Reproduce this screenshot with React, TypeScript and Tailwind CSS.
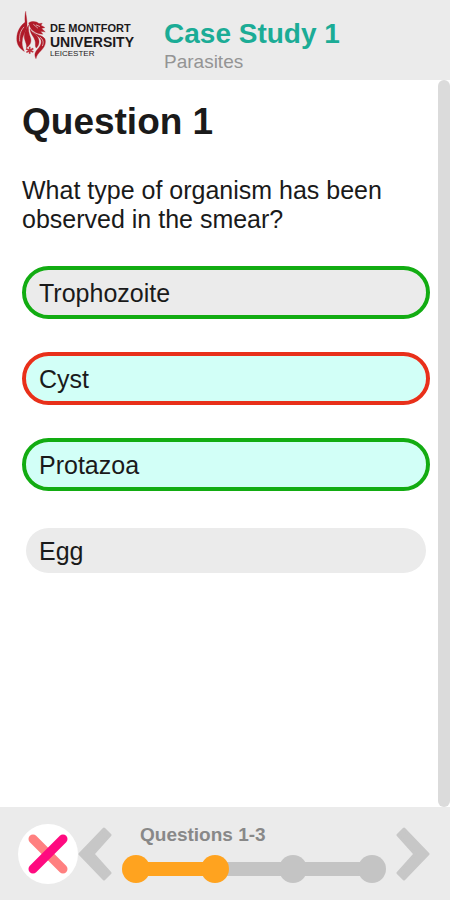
import React, { useState } from "react";

type Result = "correct" | "wrong" | "none";

interface Option {
  label: string;
  chosen: boolean;
  result: Result;
}

const initialOptions: Option[] = [
  { label: "Trophozoite", chosen: false, result: "correct" },
  { label: "Cyst", chosen: true, result: "wrong" },
  { label: "Protazoa", chosen: true, result: "correct" },
  { label: "Egg", chosen: false, result: "none" },
];

const borders: Record<Result, string> = {
  correct: "border-[#12ac12]",
  wrong: "border-[#e8301a]",
  none: "border-transparent",
};

function LionMark() {
  return (
    <svg viewBox="0 0 90 145" className="h-12 w-[30px]" aria-hidden="true">
      <g fill="#b01a28" stroke="#b01a28" strokeWidth="1">
        <path d="M29 1 C27 9 26 20 27 34 C14 44 2 60 2 84 C2 102 11 114 25 122 C18 108 17 98 19 87 C21 71 32 60 33 44 C34 30 30 16 29 1Z" />
        <path d="M38 42 C28 56 22 72 26 86 C29 97 33 102 31 112 C43 103 48 92 43 79 C39 68 36 56 38 42Z" />
        <path d="M38 36 C48 29 62 31 69 38 L79 37 L75 43 L87 50 L77 53 L88 63 L74 62 L81 70 C66 70 50 62 44 52 C41 46 39 41 38 36Z" />
        <path d="M42 54 C43 70 54 77 57 89 C60 99 56 105 61 112 C73 100 71 85 62 75 C54 67 47 62 42 54Z" />
        <path d="M52 64 C62 73 79 72 87 84 C92 99 84 111 75 120 C68 128 62 133 60 144 C53 131 58 123 66 114 C76 103 79 91 72 82 C66 76 58 72 52 64Z" />
      </g>
      <g fill="none" stroke="#ebebeb" strokeWidth="2">
        <path d="M24 48 C13 60 9 74 11 92" />
        <path d="M52 40 L66 52" />
        <path d="M60 42 L72 47" />
        <path d="M72 79 C82 86 84 96 79 106" />
      </g>
      <path
        d="M41 108 V129 M30 114 L52 124 M52 113 L31 125"
        stroke="#c03440"
        strokeWidth="5"
        fill="none"
      />
    </svg>
  );
}

function Logo() {
  return (
    <div className="flex items-start gap-1 text-[#1c1a1b]">
      <LionMark />
      <div className="flex flex-col pt-[11px] whitespace-nowrap">
        <span className="text-[11px] leading-[13px] font-bold">DE MONTFORT</span>
        <span className="text-[14px] leading-[14px] font-bold">UNIVERSITY</span>
        <span className="text-[8px] leading-[9px]">LEICESTER</span>
      </div>
    </div>
  );
}

function Chevron({ points }: { points: string }) {
  return (
    <svg viewBox="0 0 34 54" className="h-[54px] w-[34px]" aria-hidden="true">
      <polygon points={points} fill="#c7c7c7" stroke="#c7c7c7" strokeWidth="3" strokeLinejoin="round" />
    </svg>
  );
}

function Progress({ total, reached }: { total: number; reached: number }) {
  return (
    <ol className="flex items-center">
      {Array.from({ length: total }, (_, i) => {
        const colour = i < reached ? "bg-[#ffa31f]" : "bg-[#c4c4c4]";
        return (
          <React.Fragment key={i}>
            {i > 0 && <li role="presentation" className={`-mx-1 h-3.5 flex-1 ${colour}`} />}
            <li className={`z-10 size-7 rounded-full ${colour}`} aria-label={`Step ${i + 1}`} />
          </React.Fragment>
        );
      })}
    </ol>
  );
}

export default function App() {
  const [options, setOptions] = useState(initialOptions);
  const toggle = (index: number) =>
    setOptions(options.map((o, i) => (i === index ? { ...o, chosen: !o.chosen } : o)));

  return (
    <div className="flex h-screen flex-col bg-white font-['Liberation_Sans',Arial,sans-serif] text-[#1a1a1a]">
      <header className="flex h-20 shrink-0 items-start gap-[30px] bg-[#ebebeb] pt-[11px] pl-4">
        <Logo />
        <div className="pt-[7px]">
          <h1 className="text-[28px] leading-[32px] font-bold text-[#1bac96]">Case Study 1</h1>
          <p className="text-[19px] leading-[24px] text-[#949494]">Parasites</p>
        </div>
      </header>

      <div className="flex min-h-0 flex-1">
        <main className="min-w-0 flex-1 overflow-hidden pt-5 pr-2 pl-[22px]">
          <h2 className="text-[37px] leading-[44px] font-bold">Question 1</h2>
          <p className="mt-8 text-[25px] leading-[29px]">
            What type of organism has been observed in the smear?
          </p>
          <div className="mt-8 flex flex-col gap-[33px]">
            {options.map((option, i) => (
              <button
                key={option.label}
                type="button"
                aria-pressed={option.chosen}
                onClick={() => toggle(i)}
                className={`h-[53px] rounded-full border-4 bg-clip-padding pt-0.5 pl-[13px] text-left text-[25px] leading-[29px] ${
                  borders[option.result]
                } ${option.chosen ? "bg-[#d2fff7]" : "bg-[#ebebeb]"}`}
              >
                {option.label}
              </button>
            ))}
          </div>
        </main>
        <div className="w-3 shrink-0 rounded-full bg-[#dbdbdb]" />
      </div>

      <footer className="flex h-[93px] shrink-0 items-center bg-[#ebebeb] pr-5 pl-[18px]">
        <button
          type="button"
          aria-label="Close"
          className="flex size-[60px] shrink-0 items-center justify-center rounded-full bg-white"
        >
          <svg viewBox="0 0 40 40" className="size-10" fill="none" strokeWidth="9" strokeLinecap="round" aria-hidden="true">
            <path d="M5 5 L35 35" stroke="#ff8080" />
            <path d="M35 5 L5 35" stroke="#ff0a80" />
          </svg>
        </button>
        <button type="button" aria-label="Previous" className="shrink-0">
          <Chevron points="26,2 32,8 15,27 32,46 26,52 2,27" />
        </button>
        <div className="mx-2.5 min-w-0 flex-1">
          <p className="mb-[9px] pl-[18px] text-[19px] leading-[22px] font-bold text-[#888888]">Questions 1-3</p>
          <Progress total={4} reached={2} />
        </div>
        <button type="button" aria-label="Next" className="shrink-0">
          <Chevron points="8,2 2,8 19,27 2,46 8,52 32,27" />
        </button>
      </footer>
    </div>
  );
}
